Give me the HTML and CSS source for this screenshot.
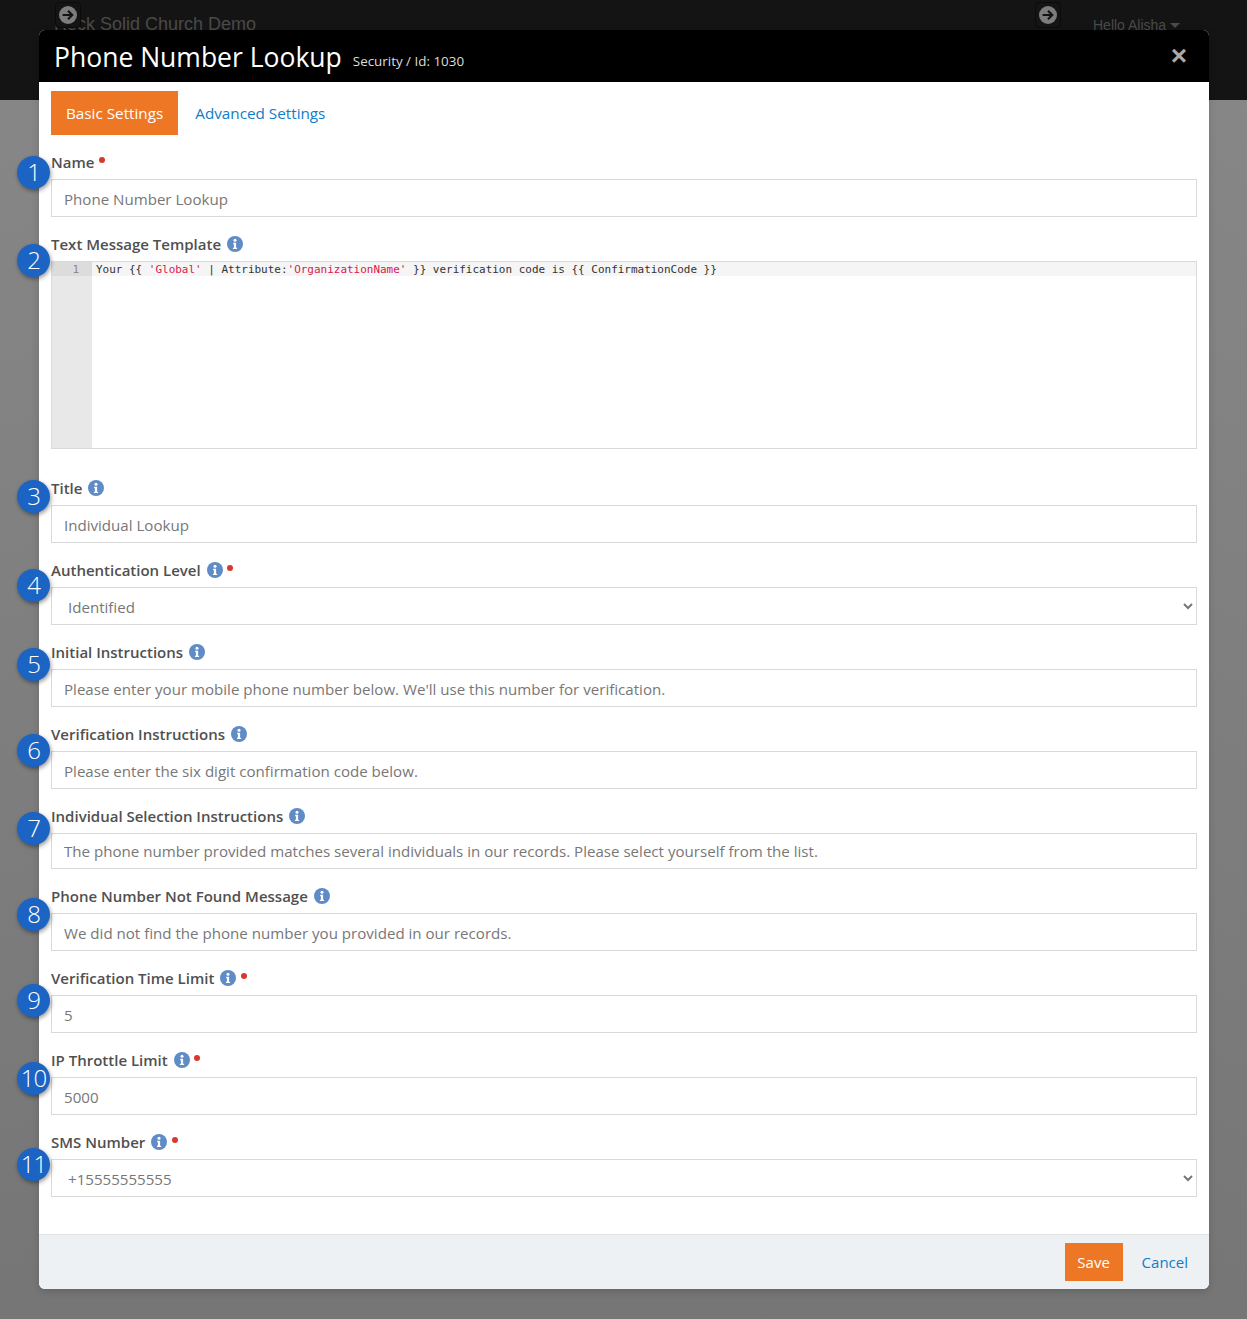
FILE: index.html
```html
<!DOCTYPE html>
<html lang="en">
<head>
    <meta charset="UTF-8">
    <meta name="viewport" content="width=device-width, initial-scale=1.0">
    <title>Phone Number Lookup</title>
    <link rel="stylesheet" href="styles.css">
</head>
<body>
    <svg class="icon-defs" width="0" height="0" aria-hidden="true">
        <symbol id="info" viewBox="0 0 16 16">
            <circle cx="8" cy="8" r="8" fill="#5f8cc6"/>
            <circle cx="8" cy="4.2" r="1.5" fill="#fff"/>
            <path d="M6.2 6.8h2.9v4.9h1v1.4H5.9v-1.4h1V8.2h-.7z" fill="#fff"/>
        </symbol>
        <symbol id="go" viewBox="0 0 18 18">
            <circle cx="9" cy="9" r="9" fill="#7d7d7d"/>
            <path d="M3.6 9h9M9 4.8 13.2 9 9 13.2" fill="none" stroke="#141414" stroke-width="2.2"/>
        </symbol>
    </svg>

    <header class="topbar">
        <span class="brand">Rock Solid Church Demo</span>
        <span class="go-btn go-left"><svg class="go-icon"><use href="#go"/></svg></span>
        <span class="go-btn go-right"><svg class="go-icon"><use href="#go"/></svg></span>
        <span class="hello">Hello Alisha <i class="caret"></i></span>
    </header>

    <div class="modal">
        <div class="modal-header">
            <h1>Phone Number Lookup</h1>
            <small>Security / Id: 1030</small>
            <span class="close">&times;</span>
        </div>

        <div class="modal-body">
            <nav class="tabs">
                <a class="tab active">Basic Settings</a>
                <a class="tab">Advanced Settings</a>
            </nav>

            <div class="field">
                <span class="badge badge-1">1</span>
                <label>Name <i class="req"></i></label>
                <input type="text" value="Phone Number Lookup">
            </div>

            <div class="field field-editor">
                <span class="badge badge-2">2</span>
                <label>Text Message Template <svg class="info"><use href="#info"/></svg></label>
                <div class="editor">
                    <div class="gutter"><div class="gutter-line">1</div></div>
                    <div class="code"><div class="code-line">Your {{ <span class="str">'Global'</span> | Attribute:<span class="str">'OrganizationName'</span> }} verification code is {{ ConfirmationCode }}</div></div>
                </div>
            </div>

            <div class="field">
                <span class="badge badge-3">3</span>
                <label>Title <svg class="info"><use href="#info"/></svg></label>
                <input type="text" value="Individual Lookup">
            </div>

            <div class="field">
                <span class="badge badge-4">4</span>
                <label>Authentication Level <svg class="info"><use href="#info"/></svg> <i class="req"></i></label>
                <select><option>Identified</option></select>
            </div>

            <div class="field">
                <span class="badge badge-5">5</span>
                <label>Initial Instructions <svg class="info"><use href="#info"/></svg></label>
                <input type="text" value="Please enter your mobile phone number below. We'll use this number for verification.">
            </div>

            <div class="field">
                <span class="badge badge-6">6</span>
                <label>Verification Instructions <svg class="info"><use href="#info"/></svg></label>
                <input type="text" value="Please enter the six digit confirmation code below.">
            </div>

            <div class="field">
                <span class="badge badge-7">7</span>
                <label>Individual Selection Instructions <svg class="info"><use href="#info"/></svg></label>
                <input class="short" type="text" value="The phone number provided matches several individuals in our records. Please select yourself from the list.">
            </div>

            <div class="field">
                <span class="badge badge-8">8</span>
                <label>Phone Number Not Found Message <svg class="info"><use href="#info"/></svg></label>
                <input type="text" value="We did not find the phone number you provided in our records.">
            </div>

            <div class="field">
                <span class="badge badge-9">9</span>
                <label>Verification Time Limit <svg class="info"><use href="#info"/></svg> <i class="req"></i></label>
                <input type="text" value="5">
            </div>

            <div class="field">
                <span class="badge badge-10">10</span>
                <label>IP Throttle Limit <svg class="info"><use href="#info"/></svg> <i class="req"></i></label>
                <input type="text" value="5000">
            </div>

            <div class="field">
                <span class="badge badge-11">11</span>
                <label>SMS Number <svg class="info"><use href="#info"/></svg> <i class="req"></i></label>
                <select><option>+15555555555</option></select>
            </div>
        </div>

        <div class="modal-footer">
            <a class="btn-save">Save</a>
            <a class="btn-cancel">Cancel</a>
        </div>
    </div>
</body>
</html>
```

FILE: styles.css
```css
:root {
    --orange: #ee7725;
    --link: #0f7dc8;
    --border: #d9d9d9;
    --label: #505050;
    --muted: #777;
}

html, body {
    margin: 0;
    padding: 0;
}

body {
    height: 1319px;
    overflow: hidden;
    position: relative;
    font-family: 'Open Sans', sans-serif;
    font-size: 15px;
    color: var(--label);
    background: linear-gradient(#888888, #767676);
}

.icon-defs {
    position: absolute;
}

.topbar {
    height: 100px;
    background-color: #141414;
    position: relative;
    font-family: 'Liberation Sans', sans-serif;
    color: #4a4a4a;
}

.brand {
    position: absolute;
    left: 54px;
    top: 14px;
    font-size: 18px;
}

.go-btn {
    position: absolute;
    top: 2px;
    width: 26px;
    height: 26px;
    box-sizing: border-box;
    display: flex;
    align-items: center;
    justify-content: center;
    background-color: #141414;
    border: 1px solid #0b0b0b;
    border-radius: 4px;
}

.go-left { left: 55px; }
.go-right { left: 1035px; }

.go-icon {
    width: 18px;
    height: 18px;
}

.hello {
    position: absolute;
    left: 1093px;
    top: 17px;
    font-size: 14px;
}

.caret {
    display: inline-block;
    border-top: 5px solid #4a4a4a;
    border-left: 5px solid transparent;
    border-right: 5px solid transparent;
    vertical-align: 2px;
}

.modal {
    position: absolute;
    left: 39px;
    top: 30px;
    width: 1170px;
    height: 1259px;
    display: flex;
    flex-direction: column;
    background-color: white;
    border-radius: 6px;
    box-shadow: 0 3px 9px rgba(0,0,0,0.15);
}

.modal-header {
    height: 52px;
    flex: none;
    display: flex;
    align-items: baseline;
    padding: 0 15px;
    background-color: black;
    color: white;
    border-radius: 6px 6px 0 0;
    position: relative;
}

.modal-header h1 {
    margin: 0;
    font-size: 26.5px;
    font-weight: 400;
    line-height: 54px;
}

.modal-header small {
    margin-left: 11px;
    position: relative;
    top: -1px;
    font-size: 13.4px;
    color: #ddd;
}

.close {
    position: absolute;
    right: 22px;
    top: 7px;
    font-family: 'Liberation Sans', sans-serif;
    font-size: 28px;
    line-height: 38px;
    font-weight: 700;
    color: #aaa;
}

.modal-body {
    flex: 1;
    padding: 9px 12px 0;
}

.tabs {
    display: flex;
    height: 44px;
    margin-bottom: 17px;
}

.tab {
    display: flex;
    align-items: center;
    padding: 0 15px;
    margin-right: 2px;
    font-size: 15.25px;
    color: var(--link);
}

.tab.active {
    background-color: var(--orange);
    color: white;
}

.field {
    position: relative;
    margin-bottom: 17px;
}

.field-editor {
    margin-bottom: 29px;
}

label {
    display: block;
    height: 21px;
    margin-bottom: 6px;
    font-size: 15px;
    font-weight: 600;
    line-height: 20px;
}

.info {
    width: 16px;
    height: 16px;
    margin-left: 2px;
    vertical-align: -2px;
}

.req {
    display: inline-block;
    width: 6px;
    height: 6px;
    margin-left: 1px;
    border-radius: 50%;
    background-color: #d9392b;
    vertical-align: 5px;
}

input, select {
    display: block;
    width: 100%;
    height: 38px;
    box-sizing: border-box;
    padding: 2px 12px 0;
    border: 1px solid var(--border);
    border-radius: 0;
    background-color: white;
    font-family: 'Open Sans', sans-serif;
    font-size: 15.1px;
    color: var(--muted);
}

input.short {
    height: 36px;
    padding-top: 0;
}

.editor {
    display: flex;
    height: 188px;
    box-sizing: border-box;
    border: 1px solid var(--border);
    font-family: 'DejaVu Sans Mono', monospace;
    font-size: 10.97px;
    line-height: 13px;
    color: #333;
}

.gutter {
    width: 40px;
    flex: none;
    background-color: #e8e8e8;
}

.gutter-line {
    padding: 1px 13px 0 0;
    text-align: right;
    background-color: #dcdcdc;
    color: #888;
}

.code {
    flex: 1;
}

.code-line {
    padding: 1px 0 0 4px;
    background-color: #f5f5f5;
    white-space: pre;
}

.str {
    color: #d9184f;
}

.badge {
    position: absolute;
    left: -34px;
    width: 33px;
    height: 33px;
    box-sizing: border-box;
    padding-bottom: 2px;
    display: flex;
    align-items: center;
    justify-content: center;
    border-radius: 50%;
    background-color: #1b64c4;
    box-shadow: 1px 2px 4px rgba(0,0,0,0.4);
    color: white;
    font-size: 24px;
    font-weight: 300;
    letter-spacing: -1px;
    z-index: 2;
}

.badge-1 { top: 4px; }
.badge-2 { top: 10px; }
.badge-3 { top: 2px; }
.badge-4 { top: 9px; }
.badge-5 { top: 6px; }
.badge-6 { top: 10px; }
.badge-7 { top: 6px; }
.badge-8 { top: 12px; }
.badge-9 { top: 16px; }
.badge-10 { top: 12px; }
.badge-11 { top: 16px; }

.modal-footer {
    height: 54px;
    flex: none;
    display: flex;
    align-items: center;
    justify-content: flex-end;
    padding-right: 21px;
    background-color: #eef1f4;
    border-top: 1px solid #e3e3e3;
    border-radius: 0 0 6px 6px;
}

.btn-save {
    display: flex;
    align-items: center;
    justify-content: center;
    width: 58px;
    height: 38px;
    margin-right: 19px;
    background-color: var(--orange);
    color: white;
    font-size: 15px;
}

.btn-cancel {
    color: var(--link);
    font-size: 15px;
}
```
